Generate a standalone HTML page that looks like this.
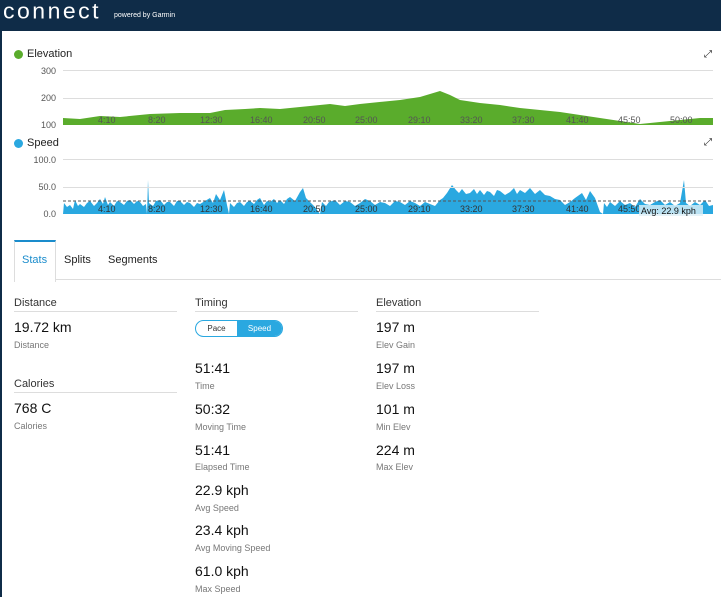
<!DOCTYPE html>
<html><head><meta charset="utf-8"><style>
body{margin:0;width:721px;height:597px;overflow:hidden;background:#fff;font-family:"Liberation Sans",sans-serif;position:relative;color:#222}
.a{position:absolute;white-space:nowrap}
.hd{font-size:11px;color:#333}
.v{font-size:14px;color:#111}
.l{font-size:9px;color:#777}
.ln{position:absolute;height:1px;background:#ddd}
.ax{font-size:9px;color:#555;position:absolute;text-align:right;width:44px;left:12px}
</style></head><body>
<div class="a" style="left:0;top:0;width:721px;height:31px;background:#0f2c48"></div>
<div class="a" style="left:0;top:31px;width:2px;height:566px;background:#0f2c48"></div>
<div class="a" style="left:3px;top:-2px;font-size:23px;color:#fff;letter-spacing:2.5px;transform:scaleY(0.95)">connect</div>
<div class="a" style="left:114px;top:12px;font-size:7px;color:#fff">powered by Garmin</div>

<div class="a" style="left:14px;top:50px;width:9px;height:9px;border-radius:50%;background:#5aac2c"></div>
<div class="a" style="left:27px;top:48px;font-size:11px">Elevation</div>
<div class="a" style="left:704px;top:49px;font-size:10px">⤢</div>
<div class="ax" style="top:66px">300</div><div class="ax" style="top:93px">200</div><div class="ax" style="top:120px">100</div>
<div class="ln" style="left:63px;top:70px;width:650px"></div>
<div class="ln" style="left:63px;top:98px;width:650px"></div>
<svg class="a" style="left:0;top:0" width="721" height="230">
<polygon fill="#5aac2c" points="63,125 63,118 80,119 100,116 120,117 150,114 180,113 210,113 225,110 245,109 260,108 280,109 300,107 330,104 345,106 360,104 400,100 420,97 440,91 450,95 460,100 480,103 500,105 520,108 540,110 560,112 580,115 600,118 620,121 640,124 660,122 680,120 700,118 713,118 713,125"/>
<g font-size="9" fill="#555" font-family="Liberation Sans">
<text x="98" y="123">4:10</text><text x="148" y="123">8:20</text><text x="200" y="123">12:30</text><text x="250" y="123">16:40</text><text x="303" y="123">20:50</text><text x="355" y="123">25:00</text><text x="408" y="123">29:10</text><text x="460" y="123">33:20</text><text x="512" y="123">37:30</text><text x="566" y="123">41:40</text><text x="618" y="123">45:50</text><text x="670" y="123">50:00</text>
</g>
<polygon fill="#2aa8e0" points="63,214 64,203 67,207 70,205 73,209 75,200 78,206 80,204 84,207 87,203 90,201 94,206 97,203 100,199 103,204 105,197 108,205 110,202 114,206 117,201 120,202 124,205 127,201 130,200 134,204 137,201 140,202 143,206 146,204 147,214 148,180 149,203 153,206 156,201 160,200 164,205 167,202 170,202 174,206 177,201 180,201 184,205 187,202 190,203 194,207 197,203 200,204 205,201 210,198 213,203 216,194 220,200 224,190 227,205 229,214 230,203 234,207 237,203 240,202 244,206 247,202 250,201 254,204 257,200 260,198 264,205 267,201 270,202 274,199 277,203 280,200 284,204 287,199 290,197 295,201 300,192 303,188 306,198 310,202 315,207 320,214 322,202 326,206 329,202 335,200 340,205 345,201 350,202 355,206 360,203 365,199 370,201 375,205 380,202 385,203 390,206 395,201 400,202 405,205 410,201 415,203 420,206 425,202 430,204 435,206 440,200 443,198 447,193 452,185 456,190 459,193 462,189 466,194 470,193 474,189 477,194 480,190 484,195 487,191 490,192 494,196 497,190 500,191 505,195 510,192 514,188 517,194 520,190 525,193 530,188 535,194 540,190 545,195 550,196 555,199 560,200 565,205 570,202 575,198 582,193 586,200 590,191 595,198 600,212 603,214 604,203 607,207 610,202 615,206 620,201 625,205 630,203 635,207 640,199 645,204 650,205 655,202 660,200 665,205 670,202 675,206 680,203 684,180 686,203 690,206 695,202 700,205 705,200 709,206 713,205 713,214"/>
<line x1="63" y1="201" x2="713" y2="201" stroke="#555" stroke-dasharray="3,2" stroke-width="1"/>
<g font-size="9" fill="#333" font-family="Liberation Sans">
<text x="98" y="212">4:10</text><text x="148" y="212">8:20</text><text x="200" y="212">12:30</text><text x="250" y="212">16:40</text><text x="303" y="212">20:50</text><text x="355" y="212">25:00</text><text x="408" y="212">29:10</text><text x="460" y="212">33:20</text><text x="512" y="212">37:30</text><text x="566" y="212">41:40</text><text x="618" y="212">45:50</text>
<rect x="639" y="205" width="64" height="11" fill="#dff0f8" opacity="0.8"/>
<text x="641" y="214" fill="#111">Avg: 22.9 kph</text></g>
</svg>
<div class="a" style="left:14px;top:139px;width:9px;height:9px;border-radius:50%;background:#2aa8e0"></div>
<div class="a" style="left:27px;top:137px;font-size:11px">Speed</div>
<div class="a" style="left:704px;top:137px;font-size:10px">⤢</div>
<div class="ax" style="top:155px">100.0</div><div class="ax" style="top:182px">50.0</div><div class="ax" style="top:209px">0.0</div>
<div class="ln" style="left:63px;top:159px;width:650px"></div>
<div class="ln" style="left:63px;top:187px;width:650px"></div>

<div class="ln" style="left:14px;top:279px;width:707px"></div>
<div class="a" style="left:14px;top:240px;width:40px;height:40px;border-top:2px solid #1a8ccc;border-left:1px solid #ddd;border-right:1px solid #ddd;background:#fff"></div>
<div class="a" style="left:22px;top:254px;font-size:11px;color:#1a8ccc">Stats</div>
<div class="a" style="left:64px;top:254px;font-size:11px">Splits</div>
<div class="a" style="left:108px;top:254px;font-size:11px">Segments</div>

<div class="a hd" style="left:14px;top:297px">Distance</div><div class="ln" style="left:14px;top:311px;width:163px"></div>
<div class="a v" style="left:14px;top:319px">19.72 km</div><div class="a l" style="left:14px;top:340px">Distance</div>
<div class="a hd" style="left:14px;top:378px">Calories</div><div class="ln" style="left:14px;top:392px;width:163px"></div>
<div class="a v" style="left:14px;top:400px">768 C</div><div class="a l" style="left:14px;top:421px">Calories</div>

<div class="a hd" style="left:195px;top:297px">Timing</div><div class="ln" style="left:195px;top:311px;width:163px"></div>
<div class="a" style="left:195px;top:320px;width:86px;height:15px;border:1px solid #2aa8e0;border-radius:9px;overflow:hidden;font-size:8px">
<div class="a" style="left:0;top:0;width:41px;height:15px;line-height:15px;text-align:center;color:#333">Pace</div>
<div class="a" style="left:41px;top:0;width:45px;height:15px;line-height:15px;text-align:center;background:#2aa8e0;color:#fff">Speed</div></div>
<div class="a v" style="left:195px;top:360px">51:41</div><div class="a l" style="left:195px;top:381px">Time</div>
<div class="a v" style="left:195px;top:401px">50:32</div><div class="a l" style="left:195px;top:422px">Moving Time</div>
<div class="a v" style="left:195px;top:442px">51:41</div><div class="a l" style="left:195px;top:462px">Elapsed Time</div>
<div class="a v" style="left:195px;top:482px">22.9 kph</div><div class="a l" style="left:195px;top:503px">Avg Speed</div>
<div class="a v" style="left:195px;top:522px">23.4 kph</div><div class="a l" style="left:195px;top:543px">Avg Moving Speed</div>
<div class="a v" style="left:195px;top:563px">61.0 kph</div><div class="a l" style="left:195px;top:584px">Max Speed</div>

<div class="a hd" style="left:376px;top:297px">Elevation</div><div class="ln" style="left:376px;top:311px;width:163px"></div>
<div class="a v" style="left:376px;top:319px">197 m</div><div class="a l" style="left:376px;top:340px">Elev Gain</div>
<div class="a v" style="left:376px;top:360px">197 m</div><div class="a l" style="left:376px;top:381px">Elev Loss</div>
<div class="a v" style="left:376px;top:401px">101 m</div><div class="a l" style="left:376px;top:422px">Min Elev</div>
<div class="a v" style="left:376px;top:442px">224 m</div><div class="a l" style="left:376px;top:462px">Max Elev</div>
</body></html>
